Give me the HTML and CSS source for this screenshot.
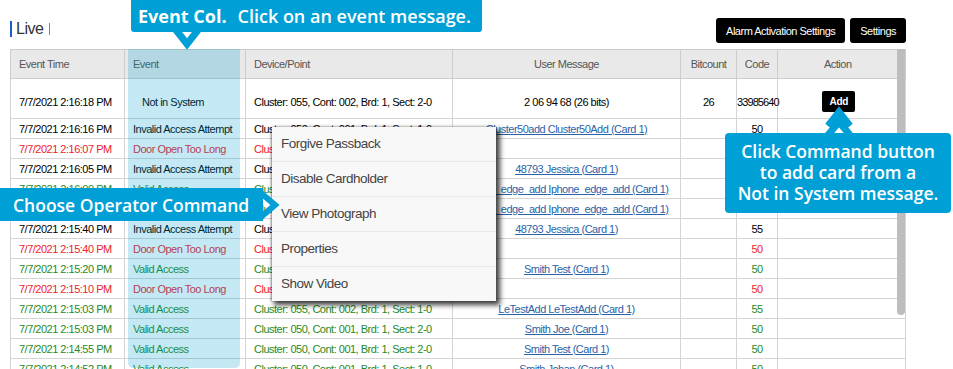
FILE: index.html
```html
<!DOCTYPE html>
<html>
<head>
<meta charset="utf-8">
<title>Live</title>
<link rel="stylesheet" href="styles.css">
</head>
<body>
<div class="page">
  <div class="toolbar">
    <div class="title"><span class="bar"></span><span class="name">Live</span><span class="sep"></span></div>
    <div class="actions">
      <button class="btn">Alarm Activation Settings</button>
      <button class="btn">Settings</button>
    </div>
  </div>

  <table class="events">
    <colgroup>
      <col class="c-time"><col class="c-event"><col class="c-dev"><col class="c-msg"><col class="c-bits"><col class="c-code"><col class="c-act"><col class="c-gut">
    </colgroup>
    <thead>
      <tr>
        <th class="left">Event Time</th>
        <th class="left">Event</th>
        <th class="left">Device/Point</th>
        <th>User Message</th>
        <th>Bitcount</th>
        <th>Code</th>
        <th class="act">Action</th>
        <th class="gut"></th>
      </tr>
    </thead>
    <tbody>
      <tr class="tall black">
        <td>7/7/2021 2:16:18 PM</td><td class="indent">Not in System</td><td>Cluster: 055, Cont: 002, Brd: 1, Sect: 2-0</td><td class="c">2 06 94 68 (26 bits)</td><td class="c">26</td><td class="c tight">33985640</td><td class="c act"><button class="add">Add</button></td><td class="gut"></td>
      </tr>
      <tr class="black">
        <td>7/7/2021 2:16:16 PM</td><td>Invalid Access Attempt</td><td>Cluster: 050, Cont: 001, Brd: 1, Sect: 1-0</td><td class="c"><a href="#">Cluster50add Cluster50Add (Card 1)</a></td><td class="c"></td><td class="c">50</td><td class="act"></td><td class="gut"></td>
      </tr>
      <tr class="red">
        <td>7/7/2021 2:16:07 PM</td><td>Door Open Too Long</td><td>Cluster: 055, Cont: 002, Brd: 1, Sect: 2-0</td><td class="c"></td><td class="c"></td><td class="c">50</td><td class="act"></td><td class="gut"></td>
      </tr>
      <tr class="black">
        <td>7/7/2021 2:16:05 PM</td><td>Invalid Access Attempt</td><td>Cluster: 050, Cont: 001, Brd: 1, Sect: 1-0</td><td class="c"><a href="#">48793 Jessica (Card 1)</a></td><td class="c"></td><td class="c">55</td><td class="act"></td><td class="gut"></td>
      </tr>
      <tr class="green">
        <td>7/7/2021 2:16:00 PM</td><td>Valid Access</td><td>Cluster: 055, Cont: 002, Brd: 1, Sect: 1-0</td><td class="c"><a href="#">Iphone_edge_add Iphone_edge_add (Card 1)</a></td><td class="c"></td><td class="c">50</td><td class="act"></td><td class="gut"></td>
      </tr>
      <tr class="green">
        <td>7/7/2021 2:15:58 PM</td><td>Valid Access</td><td>Cluster: 055, Cont: 002, Brd: 1, Sect: 1-0</td><td class="c"><a href="#">Iphone_edge_add Iphone_edge_add (Card 1)</a></td><td class="c"></td><td class="c">50</td><td class="act"></td><td class="gut"></td>
      </tr>
      <tr class="black">
        <td>7/7/2021 2:15:40 PM</td><td>Invalid Access Attempt</td><td>Cluster: 050, Cont: 001, Brd: 1, Sect: 1-0</td><td class="c"><a href="#">48793 Jessica (Card 1)</a></td><td class="c"></td><td class="c">55</td><td class="act"></td><td class="gut"></td>
      </tr>
      <tr class="red">
        <td>7/7/2021 2:15:40 PM</td><td>Door Open Too Long</td><td>Cluster: 055, Cont: 002, Brd: 1, Sect: 2-0</td><td class="c"></td><td class="c"></td><td class="c">50</td><td class="act"></td><td class="gut"></td>
      </tr>
      <tr class="green">
        <td>7/7/2021 2:15:20 PM</td><td>Valid Access</td><td>Cluster: 050, Cont: 001, Brd: 1, Sect: 2-0</td><td class="c"><a href="#">Smith Test (Card 1)</a></td><td class="c"></td><td class="c">50</td><td class="act"></td><td class="gut"></td>
      </tr>
      <tr class="red">
        <td>7/7/2021 2:15:10 PM</td><td>Door Open Too Long</td><td>Cluster: 055, Cont: 002, Brd: 1, Sect: 2-0</td><td class="c"></td><td class="c"></td><td class="c">50</td><td class="act"></td><td class="gut"></td>
      </tr>
      <tr class="green">
        <td>7/7/2021 2:15:03 PM</td><td>Valid Access</td><td>Cluster: 055, Cont: 002, Brd: 1, Sect: 1-0</td><td class="c"><a href="#">LeTestAdd LeTestAdd (Card 1)</a></td><td class="c"></td><td class="c">55</td><td class="act"></td><td class="gut"></td>
      </tr>
      <tr class="green">
        <td>7/7/2021 2:15:03 PM</td><td>Valid Access</td><td>Cluster: 050, Cont: 001, Brd: 1, Sect: 2-0</td><td class="c"><a href="#">Smith Joe (Card 1)</a></td><td class="c"></td><td class="c">50</td><td class="act"></td><td class="gut"></td>
      </tr>
      <tr class="green">
        <td>7/7/2021 2:14:55 PM</td><td>Valid Access</td><td>Cluster: 050, Cont: 001, Brd: 1, Sect: 2-0</td><td class="c"><a href="#">Smith Test (Card 1)</a></td><td class="c"></td><td class="c">50</td><td class="act"></td><td class="gut"></td>
      </tr>
      <tr class="green">
        <td>7/7/2021 2:14:52 PM</td><td>Valid Access</td><td>Cluster: 050, Cont: 001, Brd: 1, Sect: 1-0</td><td class="c"><a href="#">Smith Johan (Card 1)</a></td><td class="c"></td><td class="c">50</td><td class="act"></td><td class="gut"></td>
      </tr>
    </tbody>
  </table>

  <div class="col-highlight"></div>
  <div class="scroll-thumb"></div>

  <div class="menu">
    <div class="menu-item">Forgive Passback</div>
    <div class="menu-item">Disable Cardholder</div>
    <div class="menu-item">View Photograph</div>
    <div class="menu-item">Properties</div>
    <div class="menu-item">Show Video</div>
  </div>

  <div class="callout callout-top"><b>Event Col.</b><span>Click on an event message.</span></div>
  <svg class="chev chev-down" width="28" height="26" viewBox="0 0 28 26"><polyline points="3,0 14,14 25,0" fill="none" stroke="#00a0d6" stroke-width="7" stroke-linejoin="miter"/></svg>

  <div class="callout callout-left">Choose Operator Command</div>
  <svg class="chev chev-right" width="24" height="28" viewBox="0 0 24 28"><polyline points="2,2 16,14 2,26" fill="none" stroke="#00a0d6" stroke-width="6" stroke-linejoin="miter"/></svg>

  <div class="callout callout-right">Click Command button<br>to add card from a<br>Not in System message.</div>
  <svg class="chev chev-up" width="28" height="30" viewBox="0 0 28 30"><polyline points="3,30 14,17 25,30" fill="none" stroke="#00a0d6" stroke-width="7" stroke-linejoin="miter"/><polyline points="3,21 14,7 25,21" fill="none" stroke="#00a0d6" stroke-width="7" stroke-linejoin="miter"/></svg>
</div>
</body>
</html>
```
FILE: styles.css
```css
html, body {
  margin: 0;
  padding: 0;
  background: #fff;
  overflow: hidden;
}
body {
  font-family: "Liberation Sans", Arial, sans-serif;
  color: #000;
}
.page {
  position: relative;
  width: 895px;
  padding: 0 10px;
  height: 369px;
}
.toolbar {
  height: 49px;
  display: flex;
  justify-content: space-between;
  align-items: flex-start;
  margin-right: -1px;
}
.title {
  margin-top: 20px;
  display: flex;
  align-items: center;
  height: 17px;
}
.title .bar {
  width: 2px;
  height: 16px;
  background: #1c5cc7;
  margin-right: 4px;
}
.title .name {
  font-size: 16px;
  letter-spacing: -0.5px;
  color: #333;
  line-height: 17px;
}
.title .sep {
  width: 1px;
  height: 12px;
  background: #b47a40;
  margin-left: 6px;
  margin-top: 1px;
}
.actions {
  margin-top: 18px;
  display: flex;
  gap: 5px;
}
.btn {
  height: 25px;
  padding: 0 10px;
  background: #000;
  color: #fff;
  border: 0;
  border-radius: 3px;
  font-family: "Liberation Sans", Arial, sans-serif;
  font-size: 11px;
  letter-spacing: -0.5px;
}
.events {
  width: 895px;
  border-collapse: collapse;
  table-layout: fixed;
  font-size: 11px;
  letter-spacing: -0.5px;
}
.c-time { width: 114px; }
.c-event { width: 121px; }
.c-dev { width: 207px; }
.c-msg { width: 228px; }
.c-bits { width: 56px; }
.c-code { width: 41px; }
.c-act { width: 120px; }
.c-gut { width: 8px; }
.events th {
  height: 28px;
  background: #e9e9e9;
  color: #555;
  font-weight: normal;
  border: 1px solid #cdcdcd;
  padding: 0;
  text-align: center;
}
.events th.left {
  text-align: left;
  padding-left: 8px;
}
.events td {
  height: 19px;
  padding: 0 0 0 8px;
  border: 1px solid #d4d4d4;
  white-space: nowrap;
  overflow: visible;
}
.events td.c {
  text-align: center;
  padding: 0;
}
.events td.tight {
  letter-spacing: -0.9px;
}
.events .act { border-right: none; }
.events .gut { border-left: none; padding: 0; }
.events td.indent { padding-left: 17px; }
.events tr.tall td {
  height: 33px;
  padding-top: 6px;
}
.black td { color: #000; }
.red td { color: #ee1b2b; }
.green td { color: #1f8a25; }
.events a {
  color: #2b63a8;
  text-decoration: underline;
}
.add {
  width: 33px;
  height: 21px;
  padding: 0;
  border: 0;
  border-radius: 2px;
  background: #000;
  color: #fff;
  font-family: "Liberation Sans", Arial, sans-serif;
  font-size: 10px;
  font-weight: bold;
  letter-spacing: -0.3px;
  margin-left: 2px;
}
.col-highlight {
  position: absolute;
  left: 128px;
  top: 49px;
  width: 112px;
  height: 319px;
  background: rgba(0, 160, 212, 0.23);
  border-radius: 0 0 5px 5px;
}
.scroll-thumb {
  position: absolute;
  left: 897px;
  top: 49px;
  width: 8px;
  height: 266px;
  background: #bdbdbd;
  border-radius: 0 0 4px 4px;
}
.menu {
  position: absolute;
  left: 272px;
  top: 127px;
  width: 224px;
  background: #f8f8f8;
  box-shadow: 3px 3px 5px 1px rgba(0, 0, 0, 0.75), -1px 0 2px rgba(0, 0, 0, 0.35);
}
.menu-item {
  height: 34px;
  line-height: 34px;
  padding-left: 9px;
  font-size: 13.5px;
  letter-spacing: -0.5px;
  color: #444;
  border-top: 1px solid #e8e8e8;
}
.menu-item:first-child {
  border-top: 0;
}
.callout {
  position: absolute;
  background: #00a0d6;
  color: #fff;
  font-family: "Open Sans", "Noto Sans", sans-serif;
  font-weight: 600;
  box-sizing: border-box;
}
.callout-top {
  left: 131px;
  top: 0;
  width: 351px;
  height: 32px;
  display: flex;
  align-items: center;
  gap: 11px;
  padding-left: 7px;
  font-size: 18px;
  border-radius: 0 0 3px 3px;
}
.callout-top b {
  font-weight: 700;
}
.callout-left {
  left: 0;
  top: 188px;
  width: 263px;
  height: 33px;
  display: flex;
  align-items: center;
  padding-left: 13px;
  font-size: 17.5px;
}
.callout-right {
  left: 725px;
  top: 133px;
  width: 226px;
  height: 80px;
  border-radius: 4px;
  text-align: center;
  font-size: 17.5px;
  line-height: 21px;
  padding-top: 8px;
}
.chev {
  position: absolute;
  overflow: visible;
}
.chev-down {
  left: 173px;
  top: 30px;
}
.chev-right {
  left: 259px;
  top: 191px;
}
.chev-up {
  left: 825px;
  top: 105px;
}
```
